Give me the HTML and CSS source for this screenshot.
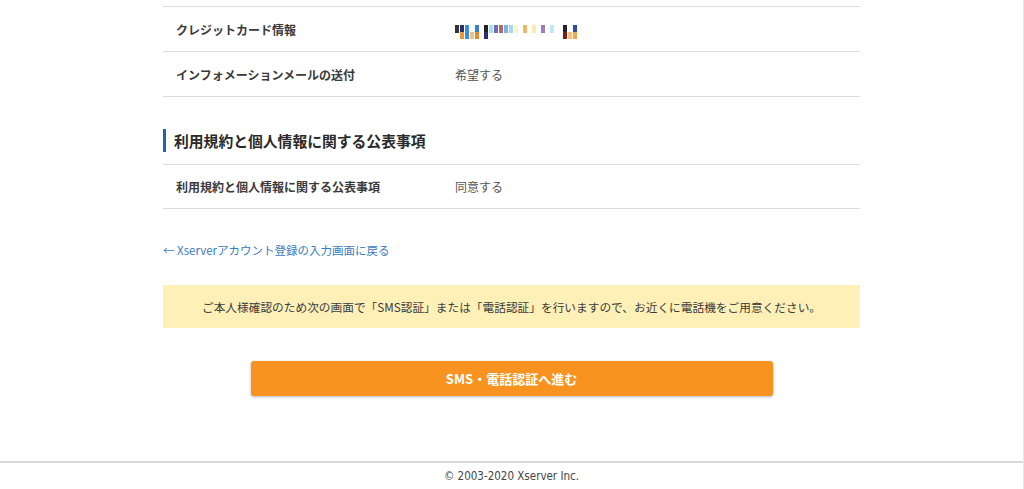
FILE: index.html
```html
<!DOCTYPE html>
<html lang="ja">
<head>
    <meta charset="UTF-8">
    <meta name="viewport" content="width=device-width, initial-scale=1.0">
    <title>お申し込み内容の確認</title>
    <link rel="stylesheet" href="styles.css">
</head>
<body>
    <div class="page">
        <div class="confirm">
            <table class="confirm-table">
                <tr>
                    <th>クレジットカード情報</th>
                    <td>
                        <span class="masked">
                            <i style="background:#333"></i><i class="split" style="--a:#2a2f6e;--b:#e49a3a"></i><i class="tall" style="background:#3a8fd6"></i><i class="low" style="background:#f0c08a"></i><i class="split" style="--a:#3a7fd0;--b:#e08a2a"></i>
                            <i class="gap"></i><i class="split" style="--a:#222;--b:#2a2f6e"></i><i style="background:#a6dcf6"></i><i style="background:#6e6cb4"></i><i style="background:#b06a6a"></i><i style="background:#72b4ea"></i><i style="background:#a6d6f6"></i><i style="background:#fff4c6"></i>
                            <i class="gap"></i><i style="background:#f0b46c"></i><i class="gap"></i><i style="background:#fde9b0"></i><i class="gap"></i><i style="background:#9b7cc0"></i><i class="gap"></i><i style="background:#bfe9fb"></i>
                            <i class="gap"></i><i class="gap"></i><i class="split" style="--a:#222;--b:#7d1c1c"></i><i class="split" style="--a:#fff;--b:#f5c07a"></i><i class="split" style="--a:#3049a6;--b:#f0a850"></i>
                        </span>
                    </td>
                </tr>
                <tr>
                    <th>インフォメーションメールの送付</th>
                    <td>希望する</td>
                </tr>
            </table>

            <h2 class="section-title">利用規約と個人情報に関する公表事項</h2>
            <table class="confirm-table confirm-table--compact">
                <tr>
                    <th>利用規約と個人情報に関する公表事項</th>
                    <td>同意する</td>
                </tr>
            </table>

            <p class="back-link"><a href="#">← Xserverアカウント登録の入力画面に戻る</a></p>

            <div class="notice">
                ご本人様確認のため次の画面で「SMS認証」または「電話認証」を行いますので、お近くに電話機をご用意ください。
            </div>

            <div class="actions">
                <button class="btn-next" type="button">SMS・電話認証へ進む</button>
            </div>
        </div>
    </div>

    <footer class="footer">
        <p>© 2003-2020 Xserver Inc.</p>
    </footer>
</body>
</html>
```

FILE: styles.css
```css
:root {
    --text: #333333;
    --text-sub: #555555;
    --line: #dcdcdc;
    --blue: #1f63b5;
    --link: #3a7cc0;
    --orange: #f7931e;
    --notice-bg: #fff0b8;
}

* {
    margin: 0;
    padding: 0;
    box-sizing: border-box;
}

body {
    font-family: "Noto Sans CJK JP", "Noto Sans", sans-serif;
    color: var(--text);
    background: #ffffff;
    border-right: 1px solid #e6e6e6;
    min-height: 489px;
}

.confirm {
    width: 697px;
    margin: 0 auto;
    padding: 6px 0 65px;
}

.confirm-table {
    width: 100%;
    border-collapse: collapse;
}

.confirm-table tr {
    border-top: 1px solid var(--line);
    border-bottom: 1px solid var(--line);
}

.confirm-table th,
.confirm-table td {
    height: 45px;
    font-size: 12px;
    text-align: left;
    vertical-align: middle;
}

.confirm-table--compact th,
.confirm-table--compact td {
    height: 44px;
}

.confirm-table th {
    width: 292px;
    padding-left: 13px;
    font-weight: 700;
    color: #3a3a3a;
}

.confirm-table td {
    color: var(--text-sub);
}

/* masked card number (blurred blocks) */
.masked {
    display: inline-flex;
    align-items: flex-start;
    height: 14px;
    margin-top: 3px;
}

.masked i {
    display: block;
    width: 4px;
    height: 8px;
    margin-right: 1px;
}

.masked i.split {
    height: 14px;
    background: linear-gradient(var(--a) 0 50%, var(--b) 50% 100%);
}

.masked i.tall {
    height: 14px;
}

.masked i.low {
    height: 14px;
    background: linear-gradient(#fff 0 50%, #f0c08a 50% 100%) !important;
}

.masked i.gap {
    width: 3px;
    background: none;
}

.section-title {
    margin: 32px 0 12px;
    padding-left: 8px;
    border-left: 3px solid var(--blue);
    font-size: 14.8px;
    line-height: 23px;
    font-weight: 700;
    color: #2a2a2a;
}

.back-link {
    margin-top: 32px;
    font-size: 11.5px;
    line-height: 18px;
}

.back-link a {
    color: var(--link);
    text-decoration: none;
}

.notice {
    margin-top: 26px;
    height: 43px;
    display: flex;
    align-items: center;
    justify-content: center;
    background: var(--notice-bg);
    font-size: 11.7px;
    color: #3a3a3a;
}

.actions {
    margin-top: 33px;
    display: flex;
    justify-content: center;
}

.btn-next {
    width: 522px;
    height: 35px;
    border: none;
    border-radius: 3px;
    background: var(--orange);
    color: #ffffff;
    font-family: inherit;
    font-size: 13px;
    font-weight: 700;
    box-shadow: 0 1px 3px rgba(0, 0, 0, 0.3);
    cursor: pointer;
}

.footer {
    border-top: 2px solid #d8d8d8;
    height: 28px;
    display: flex;
    align-items: center;
    justify-content: center;
    background: #ffffff;
}

.footer p {
    font-family: "DejaVu Sans Condensed", "DejaVu Sans", sans-serif;
    font-stretch: condensed;
    font-size: 11.5px;
    color: #444444;
}
```
